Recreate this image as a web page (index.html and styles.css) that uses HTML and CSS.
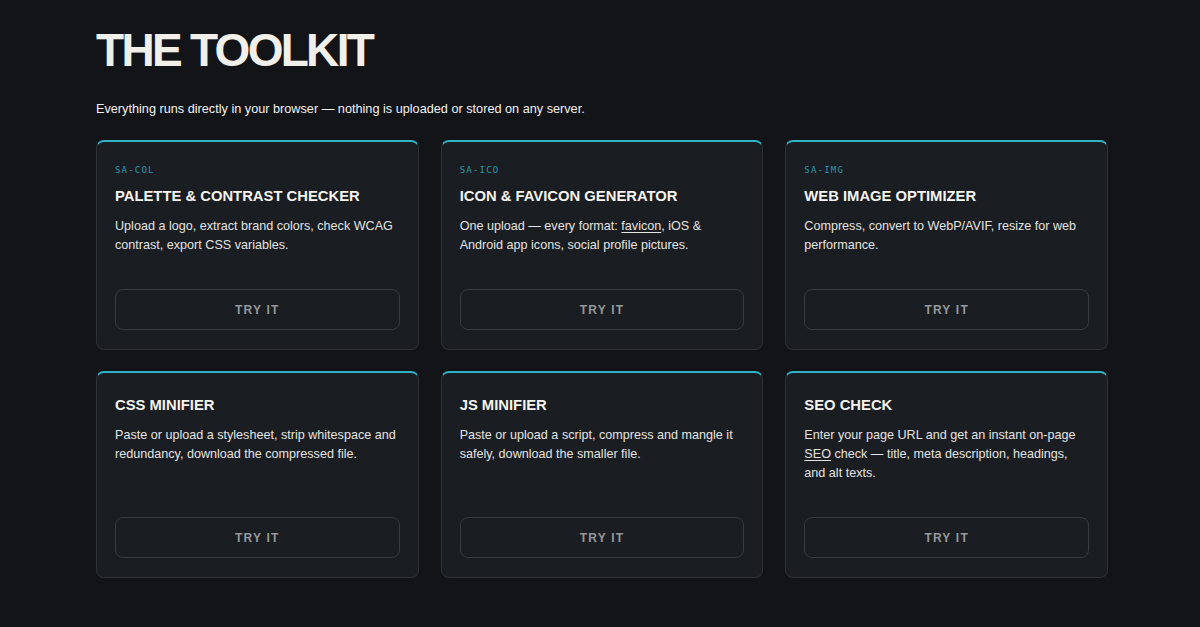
FILE: index.html
```html
<!DOCTYPE html>
<html lang="en">
<head>
<meta charset="utf-8">
<title>The Toolkit</title>
<link rel="stylesheet" href="styles.css">
</head>
<body>
<main class="page">
  <h1 class="page-title">THE TOOLKIT</h1>
  <p class="page-lead">Everything runs directly in your browser — nothing is uploaded or stored on any server.</p>

  <section class="tools">
    <article class="tool">
      <div class="tool-code">SA-COL</div>
      <h2 class="tool-name">PALETTE &amp; CONTRAST CHECKER</h2>
      <p class="tool-desc">Upload a logo, extract brand colors, check WCAG contrast, export CSS variables.</p>
      <a class="tool-btn" href="#">TRY IT</a>
    </article>
    <article class="tool">
      <div class="tool-code">SA-ICO</div>
      <h2 class="tool-name">ICON &amp; FAVICON GENERATOR</h2>
      <p class="tool-desc">One upload — every format: <abbr class="term">favicon</abbr>, iOS &amp; Android app icons, social profile pictures.</p>
      <a class="tool-btn" href="#">TRY IT</a>
    </article>
    <article class="tool">
      <div class="tool-code">SA-IMG</div>
      <h2 class="tool-name">WEB IMAGE OPTIMIZER</h2>
      <p class="tool-desc">Compress, convert to WebP/AVIF, resize for web performance.</p>
      <a class="tool-btn" href="#">TRY IT</a>
    </article>
    <article class="tool">
      <h2 class="tool-name">CSS MINIFIER</h2>
      <p class="tool-desc">Paste or upload a stylesheet, strip whitespace and redundancy, download the compressed file.</p>
      <a class="tool-btn" href="#">TRY IT</a>
    </article>
    <article class="tool">
      <h2 class="tool-name">JS MINIFIER</h2>
      <p class="tool-desc">Paste or upload a script, compress and mangle it safely, download the smaller file.</p>
      <a class="tool-btn" href="#">TRY IT</a>
    </article>
    <article class="tool">
      <h2 class="tool-name">SEO CHECK</h2>
      <p class="tool-desc">Enter your page URL and get an instant on-page <abbr class="term">SEO</abbr> check — title, meta description, headings, and alt texts.</p>
      <a class="tool-btn" href="#">TRY IT</a>
    </article>
  </section>
</main>
</body>
</html>
```

FILE: styles.css
```css
* { box-sizing: border-box; }

html, body {
  margin: 0;
  padding: 0;
  background: #121417;
}

body {
  font-family: "Liberation Sans", Arial, Helvetica, sans-serif;
  color: #eceae4;
}

.page {
  width: 1012px;
  margin-left: 96px;
  padding-top: 28px;
}

.page-title {
  margin: 0;
  font-size: 46px;
  line-height: 44px;
  font-weight: 700;
  letter-spacing: -2.7px;
  color: #f1efe9;
}

.page-lead {
  margin: 29px 0 0;
  font-size: 12.7px;
  line-height: 16px;
  color: #f2f2f2;
}

.tools {
  margin-top: 23px;
  display: grid;
  grid-template-columns: repeat(3, 1fr);
  column-gap: 22px;
  row-gap: 21px;
}

.tool {
  display: flex;
  flex-direction: column;
  background: #1a1d21;
  border: 1px solid #2e3236;
  border-top: 2px solid #2fb3c6;
  border-radius: 8px;
  padding: 22px 18px 19px;
}

.tool-code {
  font-family: "DejaVu Sans Mono", "Liberation Mono", monospace;
  font-size: 9px;
  line-height: 12px;
  letter-spacing: 1.2px;
  color: #2a9aac;
  margin-bottom: 10px;
}

.tool-name {
  margin: 0;
  font-size: 14.8px;
  line-height: 20px;
  font-weight: 700;
  color: #f4f3ef;
}

.tool-desc {
  margin: 11px 0 34px;
  font-size: 12.6px;
  line-height: 19px;
  color: #e4e4e2;
}

.term {
  text-decoration: underline;
  text-underline-offset: 2px;
  text-decoration-thickness: 1px;
}

/* pinned to the card bottom so buttons line up across a row */
.tool-btn {
  margin-top: auto;
  display: flex;
  align-items: center;
  justify-content: center;
  height: 41px;
  border: 1px solid #383c41;
  border-radius: 8px;
  background: #1a1d21;
  color: #95989c;
  font-size: 12px;
  font-weight: 700;
  letter-spacing: 1.2px;
  text-decoration: none;
}
```
